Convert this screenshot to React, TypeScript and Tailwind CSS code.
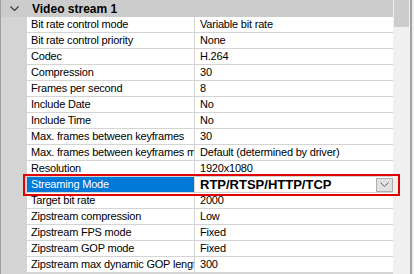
const rows: [string, string][] = [
  ["Bit rate control mode", "Variable bit rate"],
  ["Bit rate control priority", "None"],
  ["Codec", "H.264"],
  ["Compression", "30"],
  ["Frames per second", "8"],
  ["Include Date", "No"],
  ["Include Time", "No"],
  ["Max. frames between keyframes", "30"],
  ["Max. frames between keyframes mode", "Default (determined by driver)"],
  ["Resolution", "1920x1080"],
  ["Streaming Mode", "RTP/RTSP/HTTP/TCP"],
  ["Target bit rate", "2000"],
  ["Zipstream compression", "Low"],
  ["Zipstream FPS mode", "Fixed"],
  ["Zipstream GOP mode", "Fixed"],
  ["Zipstream max dynamic GOP length", "300"],
];

function Row({ name, value }: { name: string; value: string }) {
  const selected = name === "Streaming Mode";
  return (
    <div className="flex h-[16px] shrink-0">
      <div className="w-[26px] shrink-0 bg-[#d4d4d4]" />
      <div
        className={
          selected
            ? "w-[168px] shrink-0 overflow-hidden whitespace-nowrap border-b border-r border-[#d4d4d4] bg-[#0078d7] pl-[4px] leading-[15px] text-white"
            : "w-[168px] shrink-0 overflow-hidden whitespace-nowrap border-b border-r border-[#d4d4d4] bg-white pl-[4px] leading-[15px] text-black"
        }
      >
        {name}
      </div>
      {selected ? (
        <div className="flex flex-1 items-center overflow-hidden whitespace-nowrap border-b border-[#d4d4d4] bg-white pl-[5px]">
          <span className="flex-1 text-[13px] font-bold leading-[15px] tracking-normal text-black">{value}</span>
          <span className="flex h-[14px] w-[17px] items-center justify-center border border-[#adadad] bg-[#e1e1e1]">
            <svg width="9" height="5" viewBox="0 0 9 5">
              <polyline points="0.5,0.5 4.5,4.5 8.5,0.5" fill="none" stroke="#606060" strokeWidth="1" />
            </svg>
          </span>
        </div>
      ) : (
        <div className="flex-1 overflow-hidden whitespace-nowrap border-b border-[#d4d4d4] bg-white pl-[5px] leading-[15px] text-black">
          {value}
        </div>
      )}
    </div>
  );
}

export default function App() {
  return (
    <div
      className="relative flex h-[274px] w-[414px] overflow-hidden bg-[#f0f0f0] text-[11px] tracking-[-0.2px]"
      style={{ fontFamily: '"Liberation Sans", Arial, sans-serif' }}
    >
      <div className="flex w-[393px] shrink-0 flex-col border-l border-[#a0a0a0] bg-[#d4d4d4]">
        <div className="flex h-[17px] shrink-0 items-center bg-[#cccccc]">
          <div className="flex w-[26px] shrink-0 items-center justify-center">
            <svg width="9" height="5" viewBox="0 0 9 5">
              <polyline points="0.5,0.5 4.5,4.5 8.5,0.5" fill="none" stroke="#404040" strokeWidth="1.3" />
            </svg>
          </div>
          <span className="pl-[5px] text-[12px] font-bold tracking-normal text-black">Video stream 1</span>
        </div>
        {rows.map(([n, v]) => (
          <Row key={n} name={n} value={v} />
        ))}
      </div>
      <div className="flex w-[17px] shrink-0 flex-col pl-[1px]">
        <div className="h-[27px] w-[15px] bg-[#cdcdcd]" />
      </div>
      <div className="w-[2px] shrink-0 bg-[#a0a0a0]" />
      <div className="absolute left-[23px] top-[174px] h-[22px] w-[377px] border-[2px] border-[#e00000]" />
    </div>
  );
}
